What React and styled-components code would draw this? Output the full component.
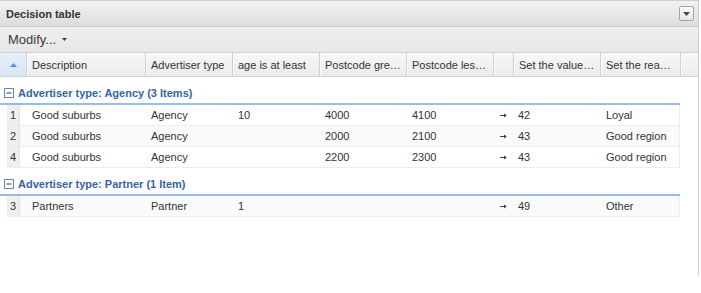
import React from "react";
import styled, { createGlobalStyle } from "styled-components";

const Global = createGlobalStyle`
  html, body { margin: 0; padding: 0; background: #fff; }
  body { font-family: "Liberation Sans", Arial, sans-serif; color: #333; }
`;

const COLS = "27px 119px 87px 87px 87px 87px 20px 87px 80px 1fr";
const ROWCOLS = "20px 119px 87px 87px 87px 87px 20px 87px 80px";

const Panel = styled.div`
  width: 698px;
  height: 275px;
  border-top: 1px solid #d0d0d0;
  border-right: 1px solid #cfcfcf;
  display: flex;
  flex-direction: column;
`;

const TitleBar = styled.div`
  height: 25px;
  border-bottom: 1px solid #cbcbcb;
  background: linear-gradient(#f1f1f1, #e6e6e6 60%, #dcdcdc);
  display: flex;
  align-items: center;
  justify-content: space-between;
  padding: 0 4px 0 6px;
`;

const Title = styled.span`
  font-size: 11px;
  font-weight: bold;
  color: #333;
`;

const ToolBtn = styled.div`
  width: 13px;
  height: 13px;
  border: 1px solid #a3a3a3;
  border-radius: 2px;
  background: linear-gradient(#fdfdfd, #e6e6e6);
  display: flex;
  align-items: center;
  justify-content: center;
`;

const Toolbar = styled.div`
  height: 25px;
  border-bottom: 1px solid #d0d0d0;
  background: linear-gradient(#efefef, #e7e7e7);
  display: flex;
  align-items: center;
  padding-left: 8px;
  gap: 6px;
`;

const MenuText = styled.span`
  font-size: 13px;
  color: #3a3a3a;
`;

const HeaderRow = styled.div`
  height: 23px;
  border-bottom: 1px solid #d0d0d0;
  background: linear-gradient(#f8f8f8, #ebebeb);
  display: grid;
  grid-template-columns: ${COLS};
`;

const HeadCell = styled.div`
  border-right: ${(p) => (p.$last ? "none" : "1px solid #d0d0d0")};
  box-shadow: inset 1px 0 #fbfbfb;
  padding-left: 5px;
  font-size: 11px;
  color: #333;
  display: flex;
  align-items: center;
  white-space: nowrap;
  overflow: hidden;
  ${(p) =>
    p.$sort &&
    `background: linear-gradient(#e6eefa, #d9e5f5); justify-content: center; padding-left: 0; box-shadow: none;`}
`;

const Group = styled.div`
  width: 680px;
`;

const GroupHeader = styled.div`
  height: 14px;
  padding: 9px 0 3px 4px;
  border-bottom: 2px solid #99bbe8;
  display: flex;
  align-items: center;
  gap: 4px;
  font-size: 11px;
  font-weight: bold;
  color: #3764a0;
`;

const Row = styled.div`
  margin-left: 7px;
  height: 20px;
  border-bottom: 1px solid #ededed;
  border-right: 1px solid #ededed;
  background: ${(p) => (p.$alt ? "#fafafa" : "#fff")};
  display: grid;
  grid-template-columns: ${ROWCOLS};
  font-size: 11px;
  color: #333;
`;

const NumCell = styled.div`
  width: 13px;
  background: #efefef;
  border-right: 1px solid #e2e2e2;
  text-align: right;
  padding-right: 0;
  line-height: 20px;
  box-sizing: border-box;
  padding-right: 3px;
`;

const Cell = styled.div`
  padding-left: ${(p) => (p.$pad ?? 5)}px;
  line-height: 20px;
  white-space: nowrap;
  overflow: hidden;
  display: flex;
  align-items: center;
`;

const Arrow = () => (
  <svg width="7" height="5" viewBox="0 0 7 5">
    <path d="M0 2.5H5.5" stroke="#444" strokeWidth="1" />
    <path d="M4 0.5L6.8 2.5L4 4.5Z" fill="#444" />
  </svg>
);

const MinusBox = () => (
  <svg width="10" height="10" viewBox="0 0 10 10">
    <rect x="0.5" y="0.5" width="9" height="9" fill="#fff" stroke="#6d86a8" />
    <path d="M2.5 5H7.5" stroke="#3d5c86" strokeWidth="1.2" />
  </svg>
);

const headers = [
  "Description",
  "Advertiser type",
  "age is at least",
  "Postcode gre…",
  "Postcode les…",
  "",
  "Set the value…",
  "Set the rea…",
];

const groups = [
  {
    title: "Advertiser type: Agency (3 Items)",
    rows: [
      ["1", "Good suburbs", "Agency", "10", "4000", "4100", "42", "Loyal", false],
      ["2", "Good suburbs", "Agency", "", "2000", "2100", "43", "Good region", true],
      ["4", "Good suburbs", "Agency", "", "2200", "2300", "43", "Good region", false],
    ],
  },
  {
    title: "Advertiser type: Partner (1 Item)",
    rows: [["3", "Partners", "Partner", "1", "", "", "49", "Other", true]],
  },
];

export default function App() {
  return (
    <>
      <Global />
      <Panel>
        <TitleBar>
          <Title>Decision table</Title>
          <ToolBtn>
            <svg width="7" height="4" viewBox="0 0 7 4">
              <path d="M0 0H7L3.5 4Z" fill="#444" />
            </svg>
          </ToolBtn>
        </TitleBar>
        <Toolbar>
          <MenuText>Modify...</MenuText>
          <svg width="5" height="3" viewBox="0 0 5 3">
            <path d="M0 0H5L2.5 3Z" fill="#15428b" />
          </svg>
        </Toolbar>
        <HeaderRow>
          <HeadCell $sort>
            <svg width="7" height="4" viewBox="0 0 7 4">
              <path d="M0 4H7L3.5 0Z" fill="#5b8ed6" />
            </svg>
          </HeadCell>
          {headers.map((h, i) => (
            <HeadCell key={i}>{h}</HeadCell>
          ))}
          <HeadCell $last />
        </HeaderRow>
        {groups.map((g) => (
          <Group key={g.title}>
            <GroupHeader>
              <MinusBox />
              {g.title}
            </GroupHeader>
            {g.rows.map((r) => (
              <Row key={r[0]} $alt={r[8]}>
                <NumCell>{r[0]}</NumCell>
                <Cell>{r[1]}</Cell>
                <Cell>{r[2]}</Cell>
                <Cell>{r[3]}</Cell>
                <Cell>{r[4]}</Cell>
                <Cell>{r[5]}</Cell>
                <Cell $pad={6}>
                  <Arrow />
                </Cell>
                <Cell $pad={4}>{r[6]}</Cell>
                <Cell>{r[7]}</Cell>
              </Row>
            ))}
          </Group>
        ))}
      </Panel>
    </>
  );
}
